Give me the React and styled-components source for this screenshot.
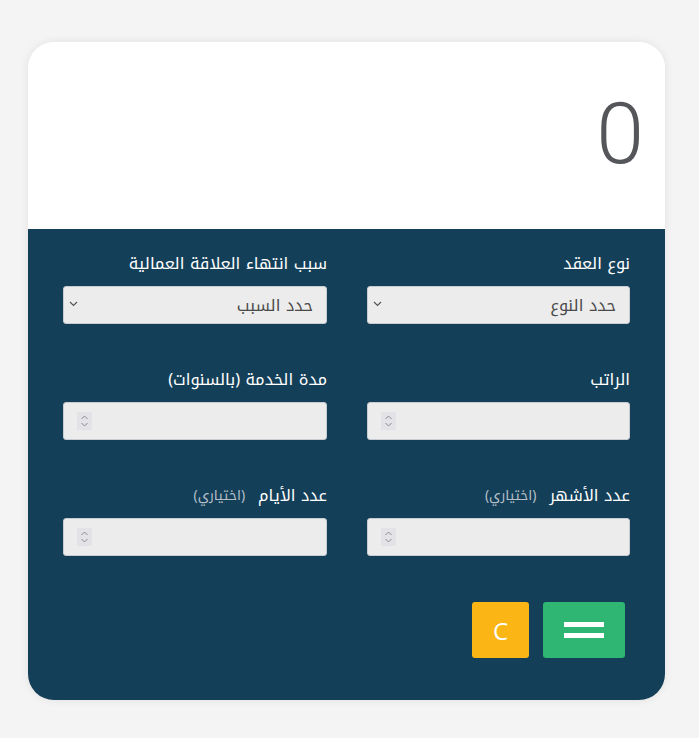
import React from "react";
import styled, { createGlobalStyle } from "styled-components";

const GlobalStyle = createGlobalStyle`
  body {
    margin: 0;
    background: #f4f4f4;
    font-family: "Open Sans", "Noto Kufi Arabic", sans-serif;
  }
`;

const Page = styled.div`
  padding: 42px 34px 38px 28px;
`;

const Card = styled.div`
  width: 637px;
  border-radius: 26px;
  overflow: hidden;
  box-shadow: 0 0 10px rgba(0, 0, 0, 0.08);
  direction: rtl;
`;

const Display = styled.div`
  height: 187px;
  box-sizing: border-box;
  background: #fff;
  display: flex;
  align-items: center;
  padding: 0 21px 4px;
  color: #55565a;
  font-family: Roboto, "Open Sans", sans-serif;
  font-size: 86px;
  font-weight: 300;
  line-height: 1;
`;

const Panel = styled.div`
  background: #143f59;
  padding: 22px 35px 42px;
`;

const Grid = styled.div`
  display: grid;
  grid-template-columns: 263px 264px;
  column-gap: 40px;
  row-gap: 43px;
`;

const Field = styled.div`
  display: flex;
  flex-direction: column;
  gap: 10px;
`;

const Label = styled.label`
  color: #fff;
  font-family: "Noto Kufi Arabic", sans-serif;
  font-size: 16.3px;
  font-weight: 400;
  line-height: 25px;
  height: 25px;
  display: flex;
  align-items: center;
  gap: 13px;
`;

const Hint = styled.span`
  color: #b6bfc7;
  font-size: 13.8px;
`;

const Control = styled.div`
  position: relative;
  height: 38px;
`;

const Select = styled.select`
  appearance: none;
  width: 100%;
  height: 38px;
  background: #ececec;
  border: 1px solid #c9ccd0;
  border-radius: 3px;
  color: #4a4a4a;
  font-size: 16.3px;
  font-family: "Noto Kufi Arabic", sans-serif;
  padding: 0 13px;
  direction: rtl;
`;

const Chevron = styled.svg`
  position: absolute;
  left: 6px;
  top: 15px;
  pointer-events: none;
`;

const NumberInput = styled.input`
  width: 100%;
  height: 38px;
  box-sizing: border-box;
  background: #ececec;
  border: 1px solid #c9ccd0;
  border-radius: 3px;
  padding: 0 12px;
  font-size: 15px;
  direction: rtl;
  appearance: textfield;

  &::-webkit-inner-spin-button,
  &::-webkit-outer-spin-button {
    -webkit-appearance: none;
    margin: 0;
  }
`;

const Spinner = styled.svg`
  position: absolute;
  left: 14px;
  top: 10px;
  pointer-events: none;
`;

const Actions = styled.div`
  display: flex;
  gap: 14px;
  padding: 46px 5px 0 0;
`;

const Button = styled.button`
  width: ${(p) => p.$w}px;
  height: 56px;
  border: none;
  border-radius: 3px;
  background: ${(p) => p.$bg};
  color: #fff;
  font-family: "Open Sans", sans-serif;
  font-size: 24px;
  display: flex;
  align-items: center;
  justify-content: center;
  padding: 0;
`;

const Equals = styled.span`
  display: flex;
  flex-direction: column;
  gap: 6px;
  & i {
    display: block;
    width: 40px;
    height: 5px;
    background: #fff;
  }
`;

function SelectField({ label, placeholder }) {
  return (
    <Field>
      <Label>{label}</Label>
      <Control>
        <Select defaultValue="">
          <option value="">{placeholder}</option>
        </Select>
        <Chevron width="9" height="6" viewBox="0 0 9 6">
          <path d="M1 1l3.5 3.5L8 1" fill="none" stroke="#555" strokeWidth="1.2" />
        </Chevron>
      </Control>
    </Field>
  );
}

function NumberField({ label, hint }) {
  return (
    <Field>
      <Label>
        {label}
        {hint && <Hint>(اختياري)</Hint>}
      </Label>
      <Control>
        <NumberInput type="number" />
        <Spinner width="15" height="18" viewBox="0 0 15 18">
          <rect width="15" height="18" fill="#e3e3e7" />
          <path d="M4.5 7l3-3 3 3M4.5 11l3 3 3-3" fill="none" stroke="#8a8a92" strokeWidth="1" />
        </Spinner>
      </Control>
    </Field>
  );
}

export default function App() {
  return (
    <Page>
      <GlobalStyle />
      <Card>
        <Display>0</Display>
        <Panel>
          <Grid>
            <SelectField label="نوع العقد" placeholder="حدد النوع" />
            <SelectField label="سبب انتهاء العلاقة العمالية" placeholder="حدد السبب" />
            <NumberField label="الراتب" />
            <NumberField label="مدة الخدمة (بالسنوات)" />
            <NumberField label="عدد الأشهر" hint />
            <NumberField label="عدد الأيام" hint />
          </Grid>
          <Actions>
            <Button $w={82} $bg="#2eb672">
              <Equals>
                <i />
                <i />
              </Equals>
            </Button>
            <Button $w={57} $bg="#fbb515">C</Button>
          </Actions>
        </Panel>
      </Card>
    </Page>
  );
}
